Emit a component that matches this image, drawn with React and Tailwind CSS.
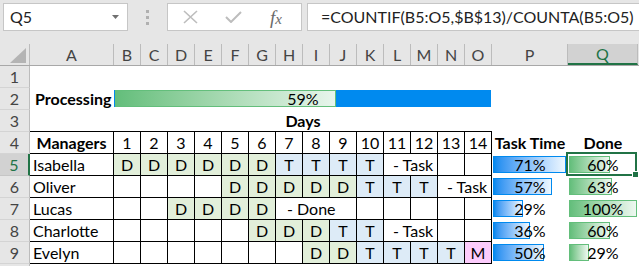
import React from 'react'

const spanW = { 1: 'w-[27px]', 2: 'w-[54px]', 3: 'w-[81px]' }
const cellBg = { D: 'bg-[#e2efda]', T: 'bg-[#ddebf7]', M: 'bg-[#fcccfc]' }

const rows = [
  { n: 5, name: 'Isabella', cells: ['D', 'D', 'D', 'D', 'D', 'D', 'T', 'T', 'T', 'T', ['- Task', 2], '', ''], task: 71, done: 60 },
  { n: 6, name: 'Oliver', cells: ['', '', '', '', 'D', 'D', 'D', 'D', 'D', 'T', 'T', 'T', ['- Task', 2]], task: 57, done: 63 },
  { n: 7, name: 'Lucas', cells: ['', '', 'D', 'D', 'D', 'D', ['- Done', 3], '', '', '', '', ''], task: 29, done: 100 },
  { n: 8, name: 'Charlotte', cells: ['', '', '', '', '', 'D', 'D', 'D', 'T', 'T', ['- Task', 2], '', ''], task: 36, done: 60 },
  { n: 9, name: 'Evelyn', cells: ['', '', '', '', '', '', '', 'D', 'D', 'T', 'T', 'T', 'T', 'M'], task: 50, done: 29 },
]

const cols = ['A', 'B', 'C', 'D', 'E', 'F', 'G', 'H', 'I', 'J', 'K', 'L', 'M', 'N', 'O', 'P']
const colW = { A: 'w-[84px]', P: 'w-[76px]' }

const RowHead = ({ n, active }) => (
  <div
    className={
      active
        ? 'w-[30px] shrink-0 flex items-center justify-center bg-[#d2d2d2] text-[#217346] border-r-2 border-r-[#217346] border-b border-b-[#c6c6c6]'
        : 'w-[30px] shrink-0 flex items-center justify-center bg-[#e6e6e6] text-[#444] border-r border-r-[#bcbcbc] border-b border-b-[#d4d4d4]'
    }
  >
    {n}
  </div>
)

const FormulaBar = () => (
  <div className="h-[44px] bg-[#e6e6e6] flex items-start pt-[3px]">
    <div className="ml-[3px] w-[125px] h-[28px] bg-white border border-[#c6c6c6] flex items-center justify-between pl-[6px] pr-[8px] text-[#222]">
      <span>Q5</span>
      <svg width="7" height="4" viewBox="0 0 7 4">
        <path d="M0 0h7L3.5 4z" fill="#707070" />
      </svg>
    </div>
    <div className="w-[39px] h-[28px] flex flex-col items-center justify-center gap-[3px]">
      <span className="w-[3px] h-[3px] bg-[#b0b0b0]" />
      <span className="w-[3px] h-[3px] bg-[#b0b0b0]" />
      <span className="w-[3px] h-[3px] bg-[#b0b0b0]" />
    </div>
    <div className="w-[135px] h-[28px] bg-white border border-[#c6c6c6] flex items-center pl-[15px] gap-[27px]">
      <svg width="15" height="14" viewBox="0 0 15 14">
        <path d="M1 1l13 12M14 1L1 13" stroke="#bdbdbd" strokeWidth="1.6" fill="none" />
      </svg>
      <svg width="17" height="12" viewBox="0 0 17 12">
        <path d="M1 6l5 5L16 1" stroke="#bdbdbd" strokeWidth="2" fill="none" />
      </svg>
      <span className="ml-[1px] font-[Liberation_Serif,serif] italic text-[19px] text-[#6a6a6a] leading-none">
        f<span className="text-[15px]">x</span>
      </span>
    </div>
    <div className="ml-[5px] flex-1 h-[28px] bg-white border border-r-0 border-[#c6c6c6] flex items-center pl-[13px] text-[#222] whitespace-nowrap overflow-hidden">
      =COUNTIF(B5:O5,$B$13)/COUNTA(B5:O5)
    </div>
  </div>
)

const ColHeader = () => (
  <div className="flex h-[22px] bg-[#e6e6e6] border-b border-b-[#a8a8a8] text-[#444]">
    <div className="w-[30px] shrink-0 border-r border-r-[#bcbcbc] flex items-end justify-end pr-[3px] pb-[2px]">
      <svg width="16" height="15" viewBox="0 0 16 15">
        <path d="M16 0v15H0z" fill="#b4b4b4" />
      </svg>
    </div>
    {cols.map((c) => (
      <div
        key={c}
        className={`${colW[c] || 'w-[27px]'} shrink-0 flex items-center justify-center border-r border-r-[#bcbcbc]`}
      >
        {c}
      </div>
    ))}
    <div className="w-[70px] shrink-0 flex items-center justify-center bg-[#d2d2d2] text-[#217346] border-b-2 border-b-[#217346] border-r border-r-[#bcbcbc]">
      Q
    </div>
    <div className="flex-1" />
  </div>
)

const DataBar = ({ value, max, full, color }) => {
  const blue = color === 'blue'
  return (
    <div className={`relative ${blue ? 'w-[76px]' : 'w-[70px]'} shrink-0 h-full pt-[2px] pl-[1px]`}>
      <div
        className={
          blue
            ? 'h-[17px] border border-[#008aef] bg-linear-to-r from-[#008aef] to-[#eef7fe]'
            : 'h-[17px] border border-[#63be7b] bg-linear-to-r from-[#63be7b] to-[#eef8f1]'
        }
        style={{ width: Math.round((value / max) * full) }}
      />
      <div className="absolute inset-0 flex items-center justify-center">{value}%</div>
    </div>
  )
}

export default function App() {
  return (
    <div className="w-[639px] h-[266px] overflow-hidden bg-white font-[Lato,sans-serif] text-[16px] leading-[22px] text-black">
      <FormulaBar />
      <ColHeader />

      {/* row 1 */}
      <div className="flex h-[22px]">
        <RowHead n={1} />
      </div>

      {/* row 2 */}
      <div className="flex h-[22px]">
        <RowHead n={2} />
        <div className="w-[84px] shrink-0 pl-[5px] font-bold">Processing</div>
        <div className="relative w-[378px] shrink-0 pt-[2px]">
          <div className="h-[17px] w-[377px] bg-[#008aef] flex pl-[1px]">
            <div className="w-[221px] h-full border border-[#63be7b] bg-linear-to-r from-[#63be7b] to-[#e8f5ec]" />
          </div>
          <div className="absolute inset-0 flex items-center justify-center">59%</div>
        </div>
      </div>

      {/* row 3 */}
      <div className="flex h-[22px]">
        <RowHead n={3} />
        <div className="w-[84px] shrink-0 border-b border-black" />
        <div className="w-[378px] shrink-0 border-b border-black text-center font-bold">Days</div>
      </div>

      {/* row 4 */}
      <div className="flex h-[22px]">
        <RowHead n={4} />
        <div className="w-[84px] shrink-0 border-r border-b border-black text-center font-bold">Managers</div>
        {Array.from({ length: 14 }, (_, i) => (
          <div key={i} className="w-[27px] shrink-0 border-r border-b border-black text-center">
            {i + 1}
          </div>
        ))}
        <div className="w-[76px] shrink-0 text-center font-bold">Task Time</div>
        <div className="w-[70px] shrink-0 text-center font-bold">Done</div>
      </div>

      {rows.map((r) => (
        <div key={r.n} className="flex h-[22px]">
          <RowHead n={r.n} active={r.n === 5} />
          <div className="w-[84px] shrink-0 border-r border-b border-black pl-[3px]">{r.name}</div>
          {r.cells.map((c, i) =>
            Array.isArray(c) ? (
              <div
                key={i}
                className={`${spanW[c[1]]} shrink-0 border-r border-b border-black whitespace-nowrap ${c[0] === '- Done' ? 'pl-[11px]' : 'pl-[9px]'}`}
              >
                {c[0]}
              </div>
            ) : (
              <div key={i} className={`w-[27px] shrink-0 border-r border-b border-black text-center ${cellBg[c] || ''}`}>
                {c}
              </div>
            )
          )}
          <DataBar value={r.task} max={71} full={73} color="blue" />
          <div className="relative">
            <DataBar value={r.done} max={100} full={68} color="green" />
            {r.n === 5 && (
              <div className="absolute left-[-2px] top-[-2px] w-[71px] h-[24px] border-2 border-[#217346]">
                <div className="absolute right-[-4px] bottom-[-4px] w-[7px] h-[7px] bg-[#217346] border border-white" />
              </div>
            )}
          </div>
        </div>
      ))}

      {/* row 10, only its top edge shows */}
      <div className="flex h-[22px]">
        <RowHead />
      </div>
    </div>
  )
}
